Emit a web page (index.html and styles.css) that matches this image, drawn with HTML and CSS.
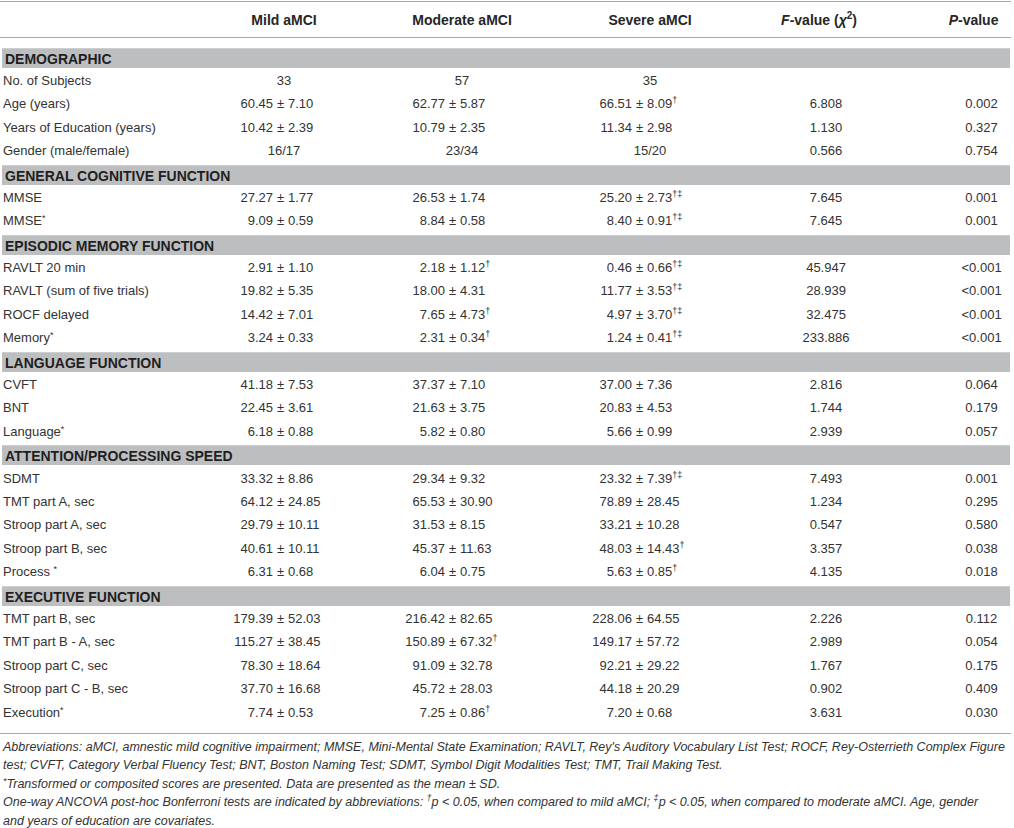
FILE: index.html
```html
<!DOCTYPE html>
<html lang="en">
<head>
<meta charset="utf-8">
<title>aMCI table</title>
<link rel="stylesheet" href="styles.css">
</head>
<body>
<div class="page">
<table class="stats">
<colgroup>
<col class="w-lab"><col class="w-ml"><col class="w-pm"><col class="w-mr">
<col class="w-dl"><col class="w-pm"><col class="w-dr">
<col class="w-sl"><col class="w-pm"><col class="w-sr">
<col class="w-f"><col class="w-p">
</colgroup>
<thead>
<tr>
<th class="lab"></th>
<th colspan="3">Mild aMCI</th>
<th colspan="3">Moderate aMCI</th>
<th colspan="3">Severe aMCI</th>
<th class="fh"><i>F</i>-value (<i>χ</i><sup class="hsup">2</sup>)</th>
<th class="ph"><i>P</i>-value</th>
</tr>
</thead>
<tbody>
<tr class="gap"><td colspan="12"></td></tr>
<tr><td colspan="12" class="band"><div class="bar">DEMOGRAPHIC</div></td></tr>
<tr><td class="lab">No. of Subjects</td><td colspan="3" class="c">33</td><td colspan="3" class="c">57</td><td colspan="3" class="c">35</td><td class="f"></td><td class="p"></td></tr>
<tr><td class="lab">Age (years)</td><td class="l">60.45</td><td class="pm">±</td><td class="r">7.10</td><td class="l">62.77</td><td class="pm">±</td><td class="r">5.87</td><td class="l">66.51</td><td class="pm">±</td><td class="r">8.09<sup>†</sup></td><td class="f">6.808</td><td class="p">0.002</td></tr>
<tr><td class="lab">Years of Education (years)</td><td class="l">10.42</td><td class="pm">±</td><td class="r">2.39</td><td class="l">10.79</td><td class="pm">±</td><td class="r">2.35</td><td class="l">11.34</td><td class="pm">±</td><td class="r">2.98</td><td class="f">1.130</td><td class="p">0.327</td></tr>
<tr><td class="lab">Gender (male/female)</td><td colspan="3" class="c">16/17</td><td colspan="3" class="c">23/34</td><td colspan="3" class="c">15/20</td><td class="f">0.566</td><td class="p">0.754</td></tr>
<tr><td colspan="12" class="band"><div class="bar">GENERAL COGNITIVE FUNCTION</div></td></tr>
<tr><td class="lab">MMSE</td><td class="l">27.27</td><td class="pm">±</td><td class="r">1.77</td><td class="l">26.53</td><td class="pm">±</td><td class="r">1.74</td><td class="l">25.20</td><td class="pm">±</td><td class="r">2.73<sup>†‡</sup></td><td class="f">7.645</td><td class="p">0.001</td></tr>
<tr><td class="lab">MMSE<sup class="ast">*</sup></td><td class="l">9.09</td><td class="pm">±</td><td class="r">0.59</td><td class="l">8.84</td><td class="pm">±</td><td class="r">0.58</td><td class="l">8.40</td><td class="pm">±</td><td class="r">0.91<sup>†‡</sup></td><td class="f">7.645</td><td class="p">0.001</td></tr>
<tr><td colspan="12" class="band"><div class="bar">EPISODIC MEMORY FUNCTION</div></td></tr>
<tr><td class="lab">RAVLT 20 min</td><td class="l">2.91</td><td class="pm">±</td><td class="r">1.10</td><td class="l">2.18</td><td class="pm">±</td><td class="r">1.12<sup>†</sup></td><td class="l">0.46</td><td class="pm">±</td><td class="r">0.66<sup>†‡</sup></td><td class="f">45.947</td><td class="p">&lt;0.001</td></tr>
<tr><td class="lab">RAVLT (sum of five trials)</td><td class="l">19.82</td><td class="pm">±</td><td class="r">5.35</td><td class="l">18.00</td><td class="pm">±</td><td class="r">4.31</td><td class="l">11.77</td><td class="pm">±</td><td class="r">3.53<sup>†‡</sup></td><td class="f">28.939</td><td class="p">&lt;0.001</td></tr>
<tr><td class="lab">ROCF delayed</td><td class="l">14.42</td><td class="pm">±</td><td class="r">7.01</td><td class="l">7.65</td><td class="pm">±</td><td class="r">4.73<sup>†</sup></td><td class="l">4.97</td><td class="pm">±</td><td class="r">3.70<sup>†‡</sup></td><td class="f">32.475</td><td class="p">&lt;0.001</td></tr>
<tr><td class="lab">Memory<sup class="ast">*</sup></td><td class="l">3.24</td><td class="pm">±</td><td class="r">0.33</td><td class="l">2.31</td><td class="pm">±</td><td class="r">0.34<sup>†</sup></td><td class="l">1.24</td><td class="pm">±</td><td class="r">0.41<sup>†‡</sup></td><td class="f">233.886</td><td class="p">&lt;0.001</td></tr>
<tr><td colspan="12" class="band"><div class="bar">LANGUAGE FUNCTION</div></td></tr>
<tr><td class="lab">CVFT</td><td class="l">41.18</td><td class="pm">±</td><td class="r">7.53</td><td class="l">37.37</td><td class="pm">±</td><td class="r">7.10</td><td class="l">37.00</td><td class="pm">±</td><td class="r">7.36</td><td class="f">2.816</td><td class="p">0.064</td></tr>
<tr><td class="lab">BNT</td><td class="l">22.45</td><td class="pm">±</td><td class="r">3.61</td><td class="l">21.63</td><td class="pm">±</td><td class="r">3.75</td><td class="l">20.83</td><td class="pm">±</td><td class="r">4.53</td><td class="f">1.744</td><td class="p">0.179</td></tr>
<tr><td class="lab">Language<sup class="ast">*</sup></td><td class="l">6.18</td><td class="pm">±</td><td class="r">0.88</td><td class="l">5.82</td><td class="pm">±</td><td class="r">0.80</td><td class="l">5.66</td><td class="pm">±</td><td class="r">0.99</td><td class="f">2.939</td><td class="p">0.057</td></tr>
<tr><td colspan="12" class="band"><div class="bar">ATTENTION/PROCESSING SPEED</div></td></tr>
<tr><td class="lab">SDMT</td><td class="l">33.32</td><td class="pm">±</td><td class="r">8.86</td><td class="l">29.34</td><td class="pm">±</td><td class="r">9.32</td><td class="l">23.32</td><td class="pm">±</td><td class="r">7.39<sup>†‡</sup></td><td class="f">7.493</td><td class="p">0.001</td></tr>
<tr><td class="lab">TMT part A, sec</td><td class="l">64.12</td><td class="pm">±</td><td class="r">24.85</td><td class="l">65.53</td><td class="pm">±</td><td class="r">30.90</td><td class="l">78.89</td><td class="pm">±</td><td class="r">28.45</td><td class="f">1.234</td><td class="p">0.295</td></tr>
<tr><td class="lab">Stroop part A, sec</td><td class="l">29.79</td><td class="pm">±</td><td class="r">10.11</td><td class="l">31.53</td><td class="pm">±</td><td class="r">8.15</td><td class="l">33.21</td><td class="pm">±</td><td class="r">10.28</td><td class="f">0.547</td><td class="p">0.580</td></tr>
<tr><td class="lab">Stroop part B, sec</td><td class="l">40.61</td><td class="pm">±</td><td class="r">10.11</td><td class="l">45.37</td><td class="pm">±</td><td class="r">11.63</td><td class="l">48.03</td><td class="pm">±</td><td class="r">14.43<sup>†</sup></td><td class="f">3.357</td><td class="p">0.038</td></tr>
<tr><td class="lab">Process <sup class="ast">*</sup></td><td class="l">6.31</td><td class="pm">±</td><td class="r">0.68</td><td class="l">6.04</td><td class="pm">±</td><td class="r">0.75</td><td class="l">5.63</td><td class="pm">±</td><td class="r">0.85<sup>†</sup></td><td class="f">4.135</td><td class="p">0.018</td></tr>
<tr><td colspan="12" class="band"><div class="bar">EXECUTIVE FUNCTION</div></td></tr>
<tr><td class="lab">TMT part B, sec</td><td class="l">179.39</td><td class="pm">±</td><td class="r">52.03</td><td class="l">216.42</td><td class="pm">±</td><td class="r">82.65</td><td class="l">228.06</td><td class="pm">±</td><td class="r">64.55</td><td class="f">2.226</td><td class="p">0.112</td></tr>
<tr><td class="lab">TMT part B - A, sec</td><td class="l">115.27</td><td class="pm">±</td><td class="r">38.45</td><td class="l">150.89</td><td class="pm">±</td><td class="r">67.32<sup>†</sup></td><td class="l">149.17</td><td class="pm">±</td><td class="r">57.72</td><td class="f">2.989</td><td class="p">0.054</td></tr>
<tr><td class="lab">Stroop part C, sec</td><td class="l">78.30</td><td class="pm">±</td><td class="r">18.64</td><td class="l">91.09</td><td class="pm">±</td><td class="r">32.78</td><td class="l">92.21</td><td class="pm">±</td><td class="r">29.22</td><td class="f">1.767</td><td class="p">0.175</td></tr>
<tr><td class="lab">Stroop part C - B, sec</td><td class="l">37.70</td><td class="pm">±</td><td class="r">16.68</td><td class="l">45.72</td><td class="pm">±</td><td class="r">28.03</td><td class="l">44.18</td><td class="pm">±</td><td class="r">20.29</td><td class="f">0.902</td><td class="p">0.409</td></tr>
<tr><td class="lab">Execution<sup class="ast">*</sup></td><td class="l">7.74</td><td class="pm">±</td><td class="r">0.53</td><td class="l">7.25</td><td class="pm">±</td><td class="r">0.86<sup>†</sup></td><td class="l">7.20</td><td class="pm">±</td><td class="r">0.68</td><td class="f">3.631</td><td class="p">0.030</td></tr>
<tr class="gap-end"><td colspan="12"></td></tr>
</tbody>
</table>
<div class="notes">
<p>Abbreviations: aMCI, amnestic mild cognitive impairment; MMSE, Mini-Mental State Examination; RAVLT, Rey's Auditory Vocabulary List Test; ROCF, Rey-Osterrieth Complex Figure<br>test; CVFT, Category Verbal Fluency Test; BNT, Boston Naming Test; SDMT, Symbol Digit Modalities Test; TMT, Trail Making Test.</p>
<p><sup class="ast">*</sup>Transformed or composited scores are presented. Data are presented as the mean ± SD.</p>
<p>One-way ANCOVA post-hoc Bonferroni tests are indicated by abbreviations: <sup class="nsup">†</sup>p &lt; 0.05, when compared to mild aMCI; <sup class="nsup">‡</sup>p &lt; 0.05, when compared to moderate aMCI. Age, gender<br>and years of education are covariates.</p>
</div>
</div>
</body>
</html>
```

FILE: styles.css
```css
* { box-sizing: border-box; }

html, body {
  margin: 0;
  padding: 0;
  background: #ffffff;
}

body {
  font-family: "Liberation Sans", Arial, Helvetica, sans-serif;
  color: #333333;
}

.page {
  width: 1011px;
  padding-top: 1px;
}

.stats {
  width: 1011px;
  border-collapse: separate;
  border-spacing: 0;
  table-layout: fixed;
  font-size: 13px;
}

.w-lab { width: 194px; }
.w-ml { width: 79px; }
.w-mr { width: 86px; }
.w-pm { width: 15px; }
.w-dl { width: 71px; }
.w-dr { width: 90px; }
.w-sl { width: 82px; }
.w-sr { width: 103px; }
.w-f { width: 140px; }
.w-p { width: 121px; }

.stats th {
  height: 37px;
  padding: 0;
  border-top: 1px solid #a9a9a9;
  border-bottom: 1px solid #a9a9a9;
  font-size: 14px;
  font-weight: bold;
  color: #262626;
  text-align: center;
  white-space: nowrap;
  vertical-align: middle;
}

.stats th.fh { padding-right: 2px; }
.stats th.ph { padding-left: 46px; }

.stats td {
  height: 23.4px;
  padding: 0;
  line-height: 16px;
  white-space: nowrap;
  vertical-align: middle;
}

.stats .lab { text-align: left; padding-left: 3px; }
.stats .l { text-align: right; }
.stats .pm { text-align: center; }
.stats .r { text-align: left; }
.stats .c { text-align: center; }
.stats .f { text-align: center; padding-left: 12px; }
.stats .p { text-align: center; padding-left: 62px; }

.stats tr.gap td { height: 7.9px; }
.stats tr.gap-end td { height: 8.5px; }

.stats td.band {
  padding: 1.7px 1px 1.7px 2px;
}

.bar {
  height: 20px;
  line-height: 20px;
  padding-left: 3px;
  background: #bdbec0;
  border-top: 1px solid #cdced0;
  font-size: 14px;
  font-weight: bold;
  color: #1f1f1f;
}

sup {
  font-size: 9px;
  line-height: 0;
  vertical-align: 5px;
}

sup.hsup {
  font-size: 10px;
  vertical-align: 6px;
}

sup.ast {
  font-size: 9px;
  vertical-align: 4px;
}

.notes {
  border-top: 1px solid #a9a9a9;
  padding: 4px 0 0 3px;
  font-size: 12.5px;
  font-style: italic;
  line-height: 18.5px;
  color: #333333;
}

.notes p {
  margin: 0;
  white-space: nowrap;
}

.notes sup.nsup {
  font-size: 9px;
  vertical-align: 5px;
}
```
